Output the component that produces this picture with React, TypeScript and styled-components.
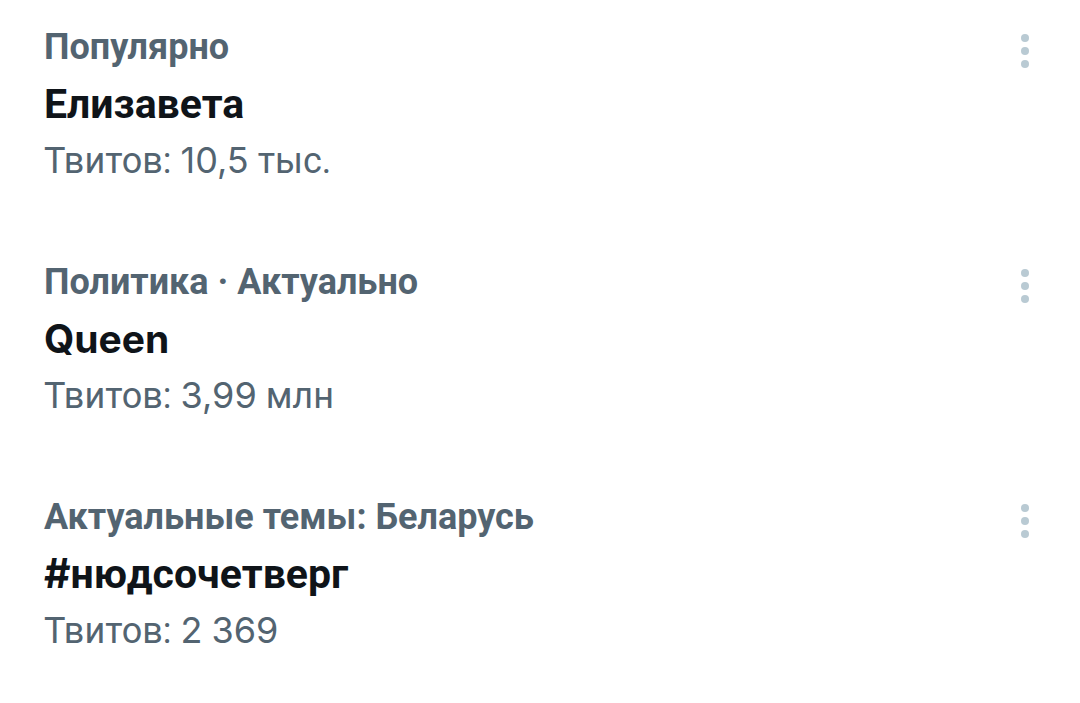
import React from "react";
import styled, { createGlobalStyle } from "styled-components";

const GlobalStyle = createGlobalStyle`
  *, *::before, *::after { box-sizing: border-box; }
  body {
    margin: 0;
    background: #ffffff;
    font-family: Roboto, "Noto Sans", sans-serif;
  }
`;

const TrendList = styled.ul`
  list-style: none;
  margin: 0;
  padding: 20px 44px 0;
`;

const TrendItem = styled.li`
  display: flex;
  justify-content: space-between;
  align-items: flex-start;

  & + & {
    margin-top: 67px;
  }
`;

const TrendText = styled.div`
  flex: 1;
  min-width: 0;
`;

const Category = styled.p`
  margin: 0;
  font-size: 36px;
  line-height: 54px;
  font-weight: 700;
  color: #536471;
`;

const Title = styled.h2<{ $latin?: boolean }>`
  margin: 0;
  font-family: ${(p) => (p.$latin ? "Inter, Roboto, sans-serif" : "inherit")};
  font-size: ${(p) => (p.$latin ? "39px" : "41px")};
  line-height: 60px;
  font-weight: 700;
  color: #0f1419;
`;

const Count = styled.p`
  margin: 0;
  font-size: 36px;
  line-height: 54px;
  font-weight: 400;
  color: #536471;
`;

const Latin = styled.span`
  font-family: Inter, Roboto, sans-serif;
  line-height: 1;
`;

const MoreButton = styled.button`
  display: flex;
  margin: 12px 6px 0 0;
  padding: 0;
  border: 0;
  background: transparent;
  cursor: pointer;
`;

const trends = [
  { category: "Популярно", title: "Елизавета", figures: ["10,5"], unit: " тыс." },
  { category: "Политика · Актуально", title: "Queen", latin: true, figures: ["3,99"], unit: " млн" },
  { category: "Актуальные темы: Беларусь", title: "нюдсочетверг", hashtag: true, figures: ["2", "369"], unit: "" },
];

export default function App() {
  return (
    <TrendList>
      <GlobalStyle />
      {trends.map((t) => (
        <TrendItem key={t.title}>
          <TrendText>
            <Category>{t.category}</Category>
            <Title $latin={t.latin}>
              {t.hashtag && <Latin>#</Latin>}
              {t.title}
            </Title>
            <Count>
              Твитов:
              {t.figures.map((figure) => (
                <React.Fragment key={figure}>
                  {" "}
                  <Latin>{figure}</Latin>
                </React.Fragment>
              ))}
              {t.unit}
            </Count>
          </TrendText>
          <MoreButton type="button" aria-label="Ещё">
            <svg width="10" height="38" viewBox="0 0 10 38" fill="#b9cad3">
              <circle cx="5" cy="6" r="4" />
              <circle cx="5" cy="19" r="4" />
              <circle cx="5" cy="32" r="4" />
            </svg>
          </MoreButton>
        </TrendItem>
      ))}
    </TrendList>
  );
}
